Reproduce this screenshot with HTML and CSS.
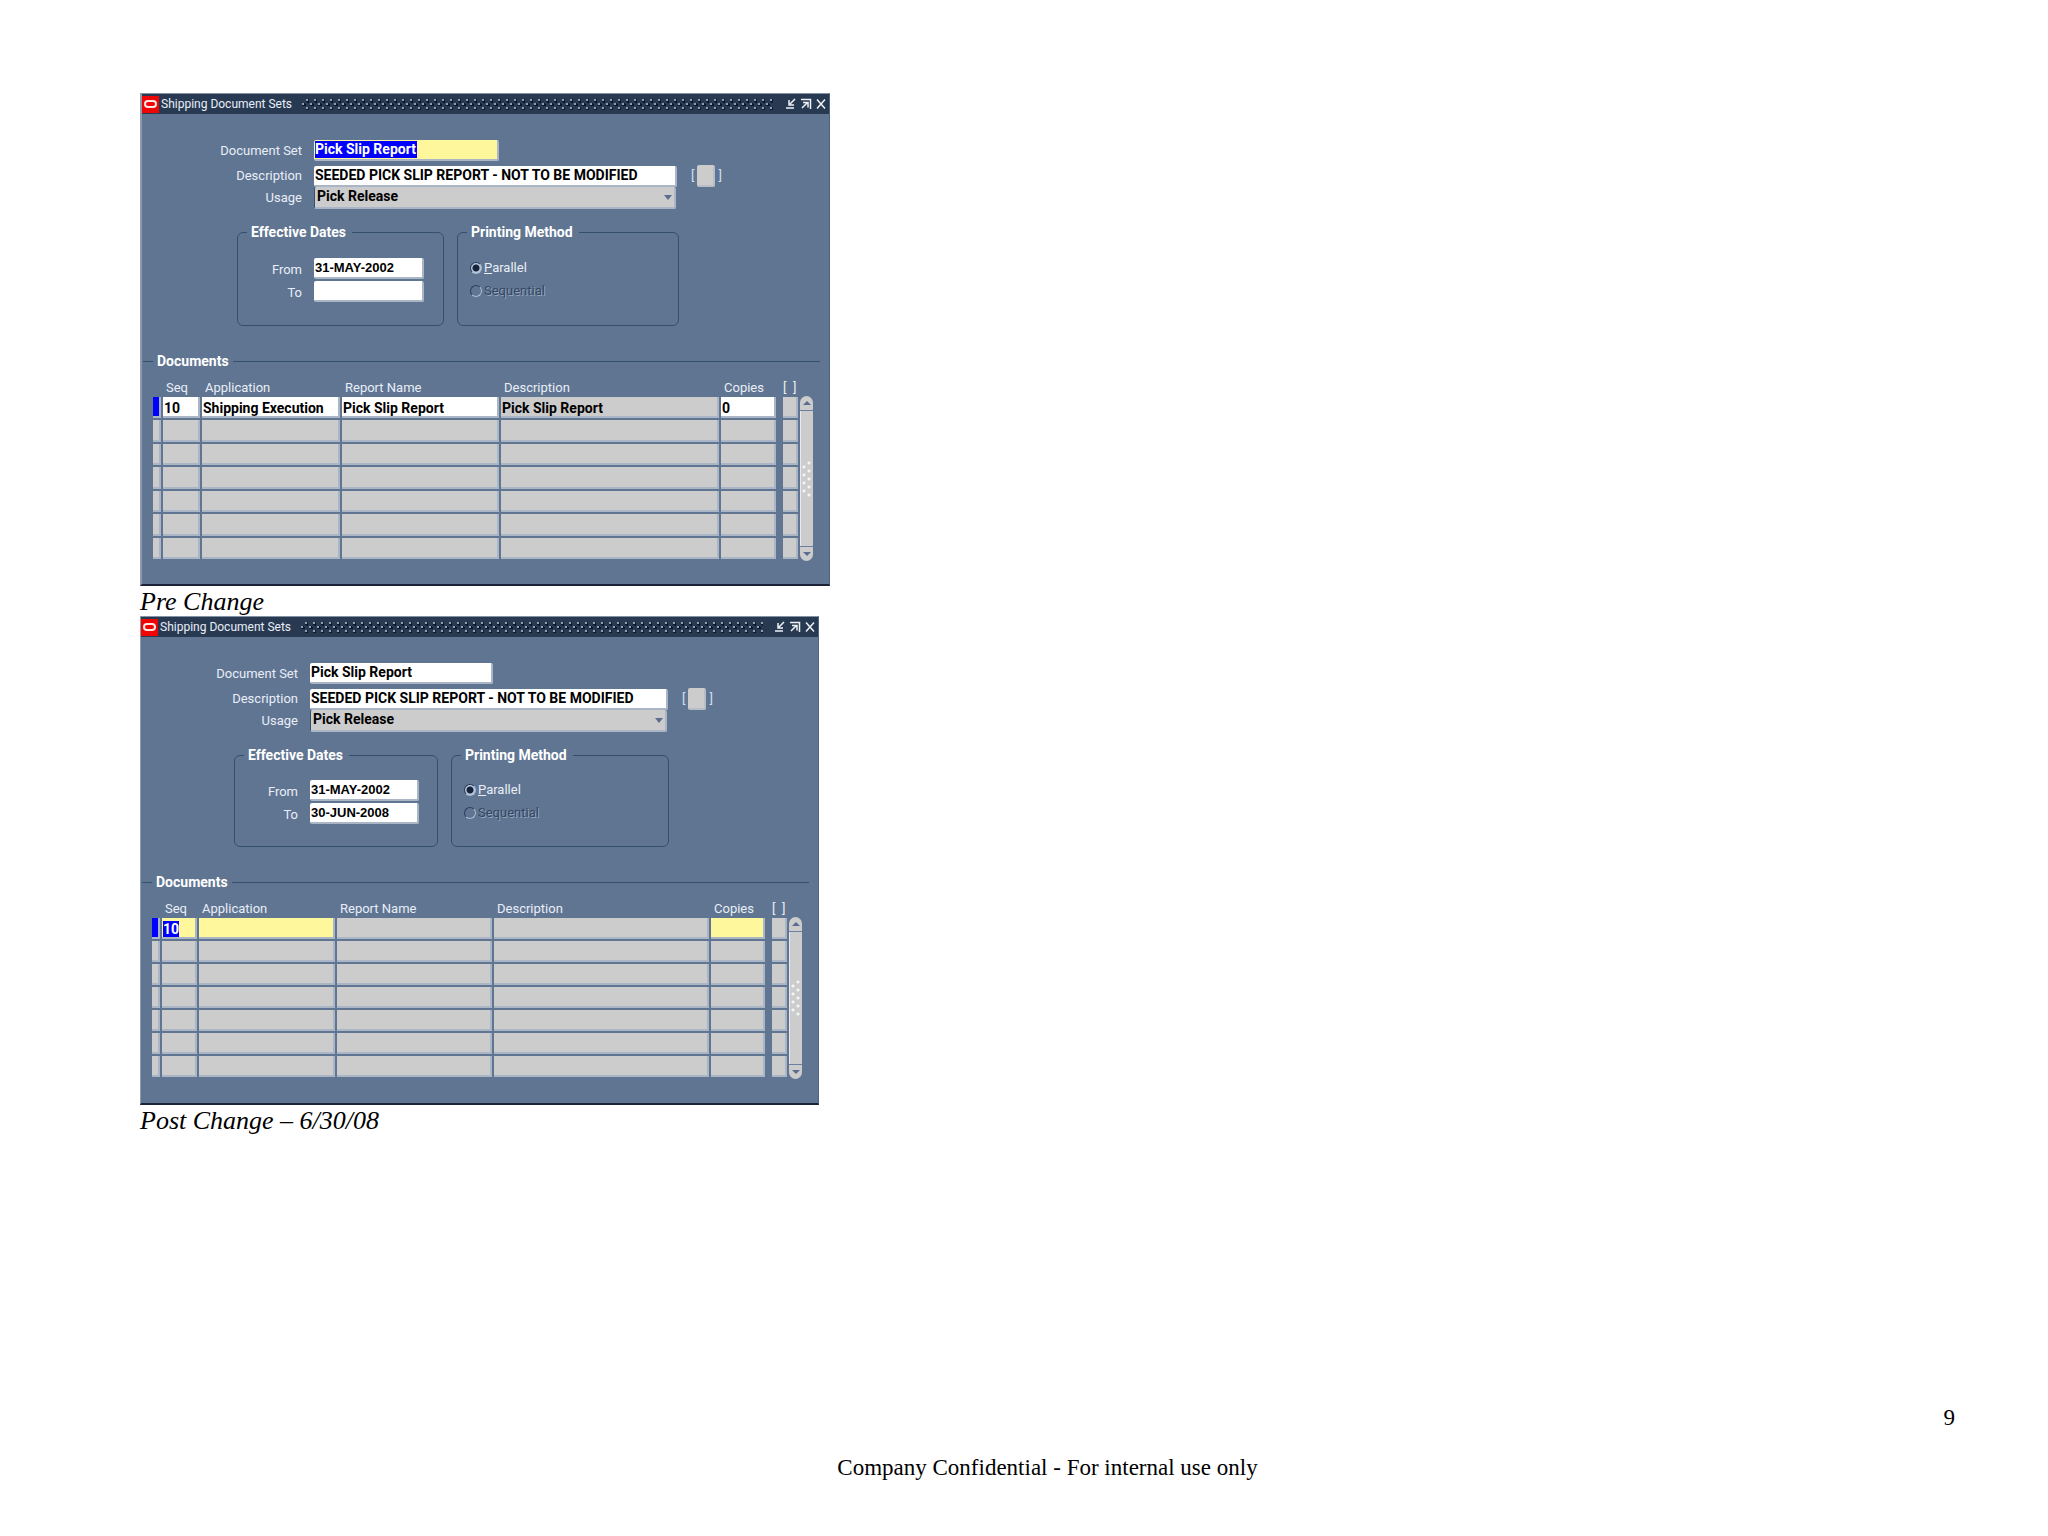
FILE: index.html
```html
<!DOCTYPE html>
<html lang="en">
<head>
<meta charset="utf-8">
<title>Shipping Document Sets</title>
<link rel="stylesheet" href="styles.css">
</head>
<body>
<main class="page">
  <figure class="shot">
    <section class="window window--pre" aria-label="Before the change">
      <header class="titlebar">
        <svg class="logo" viewBox="0 0 17 17" aria-hidden="true"><rect width="17" height="17" fill="#f00505"/><rect x="3" y="5" width="11" height="6" rx="3" fill="none" stroke="#ffe9e4" stroke-width="2"/></svg>
        <h1 class="title">Shipping Document Sets</h1>
        <span class="grip"></span>
        <button class="winbtn" type="button" aria-label="Minimize"><svg viewBox="0 0 12 12"><path d="M10 1 5 6M4 2v5h5M1 10h8"/></svg></button>
        <button class="winbtn" type="button" aria-label="Restore"><svg viewBox="0 0 12 12"><path d="M1 1.500h9.500V11M2 10l5-5M3 4.500h5v5"/></svg></button>
        <button class="winbtn" type="button" aria-label="Close"><svg viewBox="0 0 12 12"><path d="M2 1.500l8 9M10 1.500l-8 9"/></svg></button>
      </header>
      <form class="form">
        <div class="fields">
          <label for="a-set">Document Set</label>
          <input id="a-set" class="field field--set field--selected" type="text" value="Pick Slip Report">
          <label for="a-desc">Description</label>
          <div class="line">
            <input id="a-desc" class="field field--desc" type="text" value="SEEDED PICK SLIP REPORT - NOT TO BE MODIFIED">
            <span class="flex">[<button type="button" class="flexbox" aria-label="Flexfield"></button>]</span>
          </div>
          <label for="a-use">Usage</label>
          <div class="drop"><select id="a-use"><option>Pick Release</option></select></div>
        </div>
        <div class="groups">
          <fieldset class="group group--dates">
            <legend>Effective Dates</legend>
            <label for="a-from">From</label><input id="a-from" class="field field--date" type="text" value="31-MAY-2002">
            <label for="a-to">To</label><input id="a-to" class="field field--date" type="text" value="">
          </fieldset>
          <fieldset class="group group--method">
            <legend>Printing Method</legend>
            <label class="radio"><input type="radio" name="a-m" checked><span><u>P</u>arallel</span></label>
            <label class="radio radio--off"><input type="radio" name="a-m" disabled><span>Sequential</span></label>
          </fieldset>
        </div>
        <h2 class="section">Documents</h2>
        <div class="grid">
          <table class="docs">
            <colgroup><col class="c-mark"><col class="c-seq"><col class="c-app"><col class="c-rep"><col class="c-desc"><col class="c-cop"><col class="c-gap"><col class="c-flex"></colgroup>
            <thead><tr><th></th><th>Seq</th><th>Application</th><th>Report Name</th><th>Description</th><th>Copies</th><th></th><th class="br">[&nbsp; ]</th></tr></thead>
            <tbody>
              <tr><td class="mark mark--on"></td><td class="w"><input aria-label="Seq" value="10"></td><td class="w"><input aria-label="Application" value="Shipping Execution"></td><td class="w"><input aria-label="Report Name" value="Pick Slip Report"></td><td><input aria-label="Description" value="Pick Slip Report" readonly></td><td class="w"><input aria-label="Copies" value="0"></td><td class="gap"></td><td></td></tr>
              <tr><td class="mark"></td><td></td><td></td><td></td><td></td><td></td><td class="gap"></td><td></td></tr>
              <tr><td class="mark"></td><td></td><td></td><td></td><td></td><td></td><td class="gap"></td><td></td></tr>
              <tr><td class="mark"></td><td></td><td></td><td></td><td></td><td></td><td class="gap"></td><td></td></tr>
              <tr><td class="mark"></td><td></td><td></td><td></td><td></td><td></td><td class="gap"></td><td></td></tr>
              <tr><td class="mark"></td><td></td><td></td><td></td><td></td><td></td><td class="gap"></td><td></td></tr>
              <tr><td class="mark"></td><td></td><td></td><td></td><td></td><td></td><td class="gap"></td><td></td></tr>
            </tbody>
          </table>
          <div class="scroll">
            <button type="button" class="arrow arrow--up" aria-label="Scroll up"></button>
            <span class="thumb"><i></i></span>
            <button type="button" class="arrow arrow--down" aria-label="Scroll down"></button>
          </div>
        </div>
      </form>
    </section>
    <figcaption>Pre Change</figcaption>
  </figure>

  <figure class="shot">
    <section class="window window--post" aria-label="After the change">
      <header class="titlebar">
        <svg class="logo" viewBox="0 0 17 17" aria-hidden="true"><rect width="17" height="17" fill="#f00505"/><rect x="3" y="5" width="11" height="6" rx="3" fill="none" stroke="#ffe9e4" stroke-width="2"/></svg>
        <h1 class="title">Shipping Document Sets</h1>
        <span class="grip"></span>
        <button class="winbtn" type="button" aria-label="Minimize"><svg viewBox="0 0 12 12"><path d="M10 1 5 6M4 2v5h5M1 10h8"/></svg></button>
        <button class="winbtn" type="button" aria-label="Restore"><svg viewBox="0 0 12 12"><path d="M1 1.500h9.500V11M2 10l5-5M3 4.500h5v5"/></svg></button>
        <button class="winbtn" type="button" aria-label="Close"><svg viewBox="0 0 12 12"><path d="M2 1.500l8 9M10 1.500l-8 9"/></svg></button>
      </header>
      <form class="form">
        <div class="fields">
          <label for="b-set">Document Set</label>
          <input id="b-set" class="field field--set" type="text" value="Pick Slip Report">
          <label for="b-desc">Description</label>
          <div class="line">
            <input id="b-desc" class="field field--desc" type="text" value="SEEDED PICK SLIP REPORT - NOT TO BE MODIFIED">
            <span class="flex">[<button type="button" class="flexbox" aria-label="Flexfield"></button>]</span>
          </div>
          <label for="b-use">Usage</label>
          <div class="drop"><select id="b-use"><option>Pick Release</option></select></div>
        </div>
        <div class="groups">
          <fieldset class="group group--dates">
            <legend>Effective Dates</legend>
            <label for="b-from">From</label><input id="b-from" class="field field--date" type="text" value="31-MAY-2002">
            <label for="b-to">To</label><input id="b-to" class="field field--date" type="text" value="30-JUN-2008">
          </fieldset>
          <fieldset class="group group--method">
            <legend>Printing Method</legend>
            <label class="radio"><input type="radio" name="b-m" checked><span><u>P</u>arallel</span></label>
            <label class="radio radio--off"><input type="radio" name="b-m" disabled><span>Sequential</span></label>
          </fieldset>
        </div>
        <h2 class="section">Documents</h2>
        <div class="grid">
          <table class="docs">
            <colgroup><col class="c-mark"><col class="c-seq"><col class="c-app"><col class="c-rep"><col class="c-desc"><col class="c-cop"><col class="c-gap"><col class="c-flex"></colgroup>
            <thead><tr><th></th><th>Seq</th><th>Application</th><th>Report Name</th><th>Description</th><th>Copies</th><th></th><th class="br">[&nbsp; ]</th></tr></thead>
            <tbody>
              <tr><td class="mark mark--on"></td><td class="y"><input class="sel" aria-label="Seq" value="10"></td><td class="y"><input aria-label="Application"></td><td></td><td></td><td class="y"><input aria-label="Copies"></td><td class="gap"></td><td></td></tr>
              <tr><td class="mark"></td><td></td><td></td><td></td><td></td><td></td><td class="gap"></td><td></td></tr>
              <tr><td class="mark"></td><td></td><td></td><td></td><td></td><td></td><td class="gap"></td><td></td></tr>
              <tr><td class="mark"></td><td></td><td></td><td></td><td></td><td></td><td class="gap"></td><td></td></tr>
              <tr><td class="mark"></td><td></td><td></td><td></td><td></td><td></td><td class="gap"></td><td></td></tr>
              <tr><td class="mark"></td><td></td><td></td><td></td><td></td><td></td><td class="gap"></td><td></td></tr>
              <tr><td class="mark"></td><td></td><td></td><td></td><td></td><td></td><td class="gap"></td><td></td></tr>
            </tbody>
          </table>
          <div class="scroll">
            <button type="button" class="arrow arrow--up" aria-label="Scroll up"></button>
            <span class="thumb"><i></i></span>
            <button type="button" class="arrow arrow--down" aria-label="Scroll down"></button>
          </div>
        </div>
      </form>
    </section>
    <figcaption>Post Change – 6/30/08</figcaption>
  </figure>

  <footer class="footer">
    <p class="pageno">9</p>
    <p class="notice">Company Confidential - For internal use only</p>
  </footer>
</main>
</body>
</html>
```
FILE: styles.css
```css
* { box-sizing: border-box; }

body { margin: 0; background: #fff; color: #000; font-family: "Liberation Serif", serif; }

.page {
  display: flex;
  flex-direction: column;
  min-height: 100vh;
  padding: 93px 93px 55px 140px;
}

.shot { margin: 0; }
figcaption { height: 30px; font-size: 26px; font-style: italic; line-height: 32px; }

.footer { margin-top: auto; font-size: 23px; line-height: 26px; }
.footer p { margin: 0; }
.footer .pageno { margin-bottom: 24px; text-align: right; }
.notice { text-align: center; }

/* Window frame */
.window {
  --blue: #607591;
  --line: #34506f;
  --grey: #ccc;
  --edge: #aab6c6;
  width: fit-content;
  border: 1px solid #8493a4;
  border-left: 2px solid #8e9bab;
  border-right-color: #4d6480;
  border-bottom: 2px solid #1c2238;
  background: var(--blue);
  color: #e8eef8;
  font: 13px/16px Roboto, "Liberation Sans", sans-serif;
}
.window--pre {
  --label: 150px; --set: 185px; --desc: 363px; --drop: 362px; --date: 110px;
  --g1: 207px; --g2: 222px; --gpad: 85px; --seq: 39px; --app: 140px; --rep: 159px; --dsc: 220px; --cop: 57px; --tall: 182px;
}
.window--post {
  --label: 147px; --set: 183px; --desc: 358px; --drop: 357px; --date: 109px;
  --g1: 204px; --g2: 218px; --gpad: 83px; --seq: 37px; --app: 138px; --rep: 157px; --dsc: 217px; --cop: 56px; --tall: 179px;
  border-left-width: 1px;
}

.titlebar {
  display: flex;
  align-items: center;
  height: 20px;
  padding-right: 2px;
  background: #283a52;
}
.logo { width: 17px; height: 17px; }
.title { margin: 0 9px 0 2px; font-size: 12px; font-weight: 400; }
.grip {
  flex: 1;
  height: 12px;
  margin-right: 8px;
  background:
    linear-gradient(#8496aa, #8496aa) 0 6px / 8px 8px,
    #283a52;
  background:
    radial-gradient(circle at 2px 6px, #8fa1b5 1px, transparent 1px) 0 0 / 8px 8px,
    radial-gradient(circle at 6px 2px, #8fa1b5 1px, transparent 1px) 0 0 / 8px 8px,
    radial-gradient(circle at 3px 7px, #0e1a2b 2px, transparent 2px) 0 0 / 8px 8px,
    radial-gradient(circle at 7px 3px, #0e1a2b 2px, transparent 2px) 0 0 / 8px 8px,
    #283a52;
}
.winbtn { width: 12px; height: 12px; margin-left: 3px; padding: 0; border: 0; background: none; }
.winbtn svg { display: block; width: 12px; height: 12px; fill: none; stroke: #eef2f6; stroke-width: 1.500; }

/* Header fields */
.form { padding: 26px 16px 23px 10px; }
.window--post .form { padding-bottom: 24px; }
.fields {
  display: grid;
  grid-template-columns: var(--label) auto;
  grid-template-rows: 25px 22px 22px;
  column-gap: 12px;
  align-items: start;
}
.fields > label { padding-top: 3px; text-align: right; }
.line { display: flex; align-items: center; height: 22px; }
.field, select, .docs input {
  font: bold 14px/18px Roboto, "Liberation Sans", sans-serif;
  color: #000;
}
.field {
  height: 21px;
  padding: 0 1px 1px;
  border: 0;
  border-right: 2px solid var(--edge);
  border-bottom: 2px solid var(--edge);
  border-radius: 2px;
  background: #fff;
}
.field--set { width: var(--set); }
.field--desc { width: var(--desc); }
.field--date { width: var(--date); font-family: "Liberation Sans", sans-serif; font-size: 13px; }
.field--selected {
  color: #fff;
  background: linear-gradient(#00f, #00f) 1px 1px / 102px 17px no-repeat, #fff79b;
}
.flex { display: flex; align-items: center; gap: 3px; margin-left: 14px; color: #cfe0f6; }
.flexbox {
  width: 18px;
  height: 22px;
  padding: 0;
  border: 0;
  border-right: 2px solid #b9bec6;
  border-bottom: 2px solid #b9bec6;
  border-radius: 2px;
  background: var(--grey);
}
.drop { position: relative; width: var(--drop); height: 22px; }
.drop select {
  display: block;
  width: 100%;
  height: 22px;
  padding: 0 2px 2px;
  appearance: none;
  border: 0;
  border-left: 1px solid var(--line);
  border-right: 2px solid var(--edge);
  border-bottom: 2px solid var(--edge);
  border-radius: 2px;
  background: var(--grey);
}
.drop::after {
  content: "";
  position: absolute;
  top: 8px;
  right: 4px;
  border: 4px solid transparent;
  border-top: 5px solid #5c6b90;
  border-bottom: 0;
}

/* Grouped fields */
.groups { display: flex; gap: 13px; margin: 15px 0 0 var(--gpad); }
.group { margin: 0; padding: 18px 0 23px; border: 1px solid var(--line); border-radius: 6px; min-width: 0; }
.window--post .group { padding: 17px 0 22px; }
.group legend, .section { color: #fff; font-size: 14px; font-weight: 700; line-height: 16px; }
.group legend { margin-left: 9px; padding: 0 6px 0 4px; }
.group--dates {
  display: grid;
  grid-template-columns: 64px auto;
  grid-auto-rows: 21px;
  gap: 2px 12px;
  align-items: center;
  width: var(--g1);
}
.window--post .group--dates { grid-template-columns: 63px auto; }
.group--dates label { padding-top: 2px; text-align: right; }
.group--method { width: var(--g2); }
.radio { display: flex; align-items: center; gap: 2px; height: 19px; margin-left: 12px; }
.radio + .radio { margin-top: 4px; }
.radio input {
  appearance: none;
  width: 12px;
  height: 12px;
  margin: 0;
  border: 1px solid #2b3e5b;
  border-right-color: #a9bdd4;
  border-bottom-color: #a9bdd4;
  border-radius: 50%;
}
.radio input:checked { background: radial-gradient(circle, #16233c 3px, #b9c8da 4px); }
.radio--off { color: #34475f; text-shadow: 1px 1px 0 #93a8c2; }

/* Documents block */
.section { display: flex; align-items: center; gap: 4px; margin: 27px -7px 0 -9px; }
.section::before, .section::after { content: ""; height: 1px; background: var(--line); }
.section::before { width: 10px; }
.section::after { flex: 1; }
.grid { display: flex; margin-top: 10px; }
.docs { table-layout: fixed; width: 0; height: var(--tall); margin-left: 1px; border-spacing: 0; }
.docs tbody tr { height: 23px; }
.c-mark { width: 10px; }
.c-seq { width: var(--seq); }
.c-app { width: var(--app); }
.c-rep { width: var(--rep); }
.c-desc { width: var(--dsc); }
.c-cop { width: var(--cop); }
.c-gap { width: 5px; }
.c-flex { width: 17px; }
.docs th { height: 18px; padding: 0 0 1px 3px; font-weight: 400; line-height: 16px; text-align: left; vertical-align: bottom; white-space: nowrap; }
.docs th.br { padding-left: 0; }
.docs td {
  padding: 0;
  border: 0 solid var(--blue);
  border-width: 0 2px 2px 0;
  background: var(--grey);
  background-clip: padding-box;
  box-shadow: inset -3px -3px 0 -1px var(--edge);
}
.docs td.w { background-color: #fff; }
.docs td.y { background-color: #fff79b; }
.docs td.gap { background: none; box-shadow: none; }
.docs input { display: block; width: 100%; height: 20px; padding: 0 1px; border: 0; background: none; }
.docs input.sel { color: #fff; background: linear-gradient(#00f, #00f) 1px 2px / 16px 16px no-repeat; }
.docs td.mark--on { background-color: #00f; }

.scroll {
  display: flex;
  flex-direction: column;
  width: 13px;
  margin-top: 17px;
  border-radius: 7px;
  background: var(--grey);
  overflow: hidden;
}
.arrow { display: grid; place-items: center; height: 14px; padding: 0; border: 0; background: none; }
.arrow::after { content: ""; border: 4px solid transparent; }
.arrow--up::after { border-top: 0; border-bottom: 4px solid #5c6b90; }
.arrow--down::after { border-bottom: 0; border-top: 4px solid #5c6b90; }
.thumb { flex: 1; display: grid; place-items: center; border: 1px solid #6c7fa0; border-width: 1px 0; box-shadow: inset 1px 0 #e6e9ee; }
.thumb i {
  width: 10px;
  height: 36px;
  background:
    radial-gradient(circle at 2px 2px, #f4f4f4 1px, transparent 2px) 0 4px / 10px 8px,
    radial-gradient(circle at 7px 2px, #f4f4f4 1px, transparent 2px) 0 0 / 10px 8px;
}
```
